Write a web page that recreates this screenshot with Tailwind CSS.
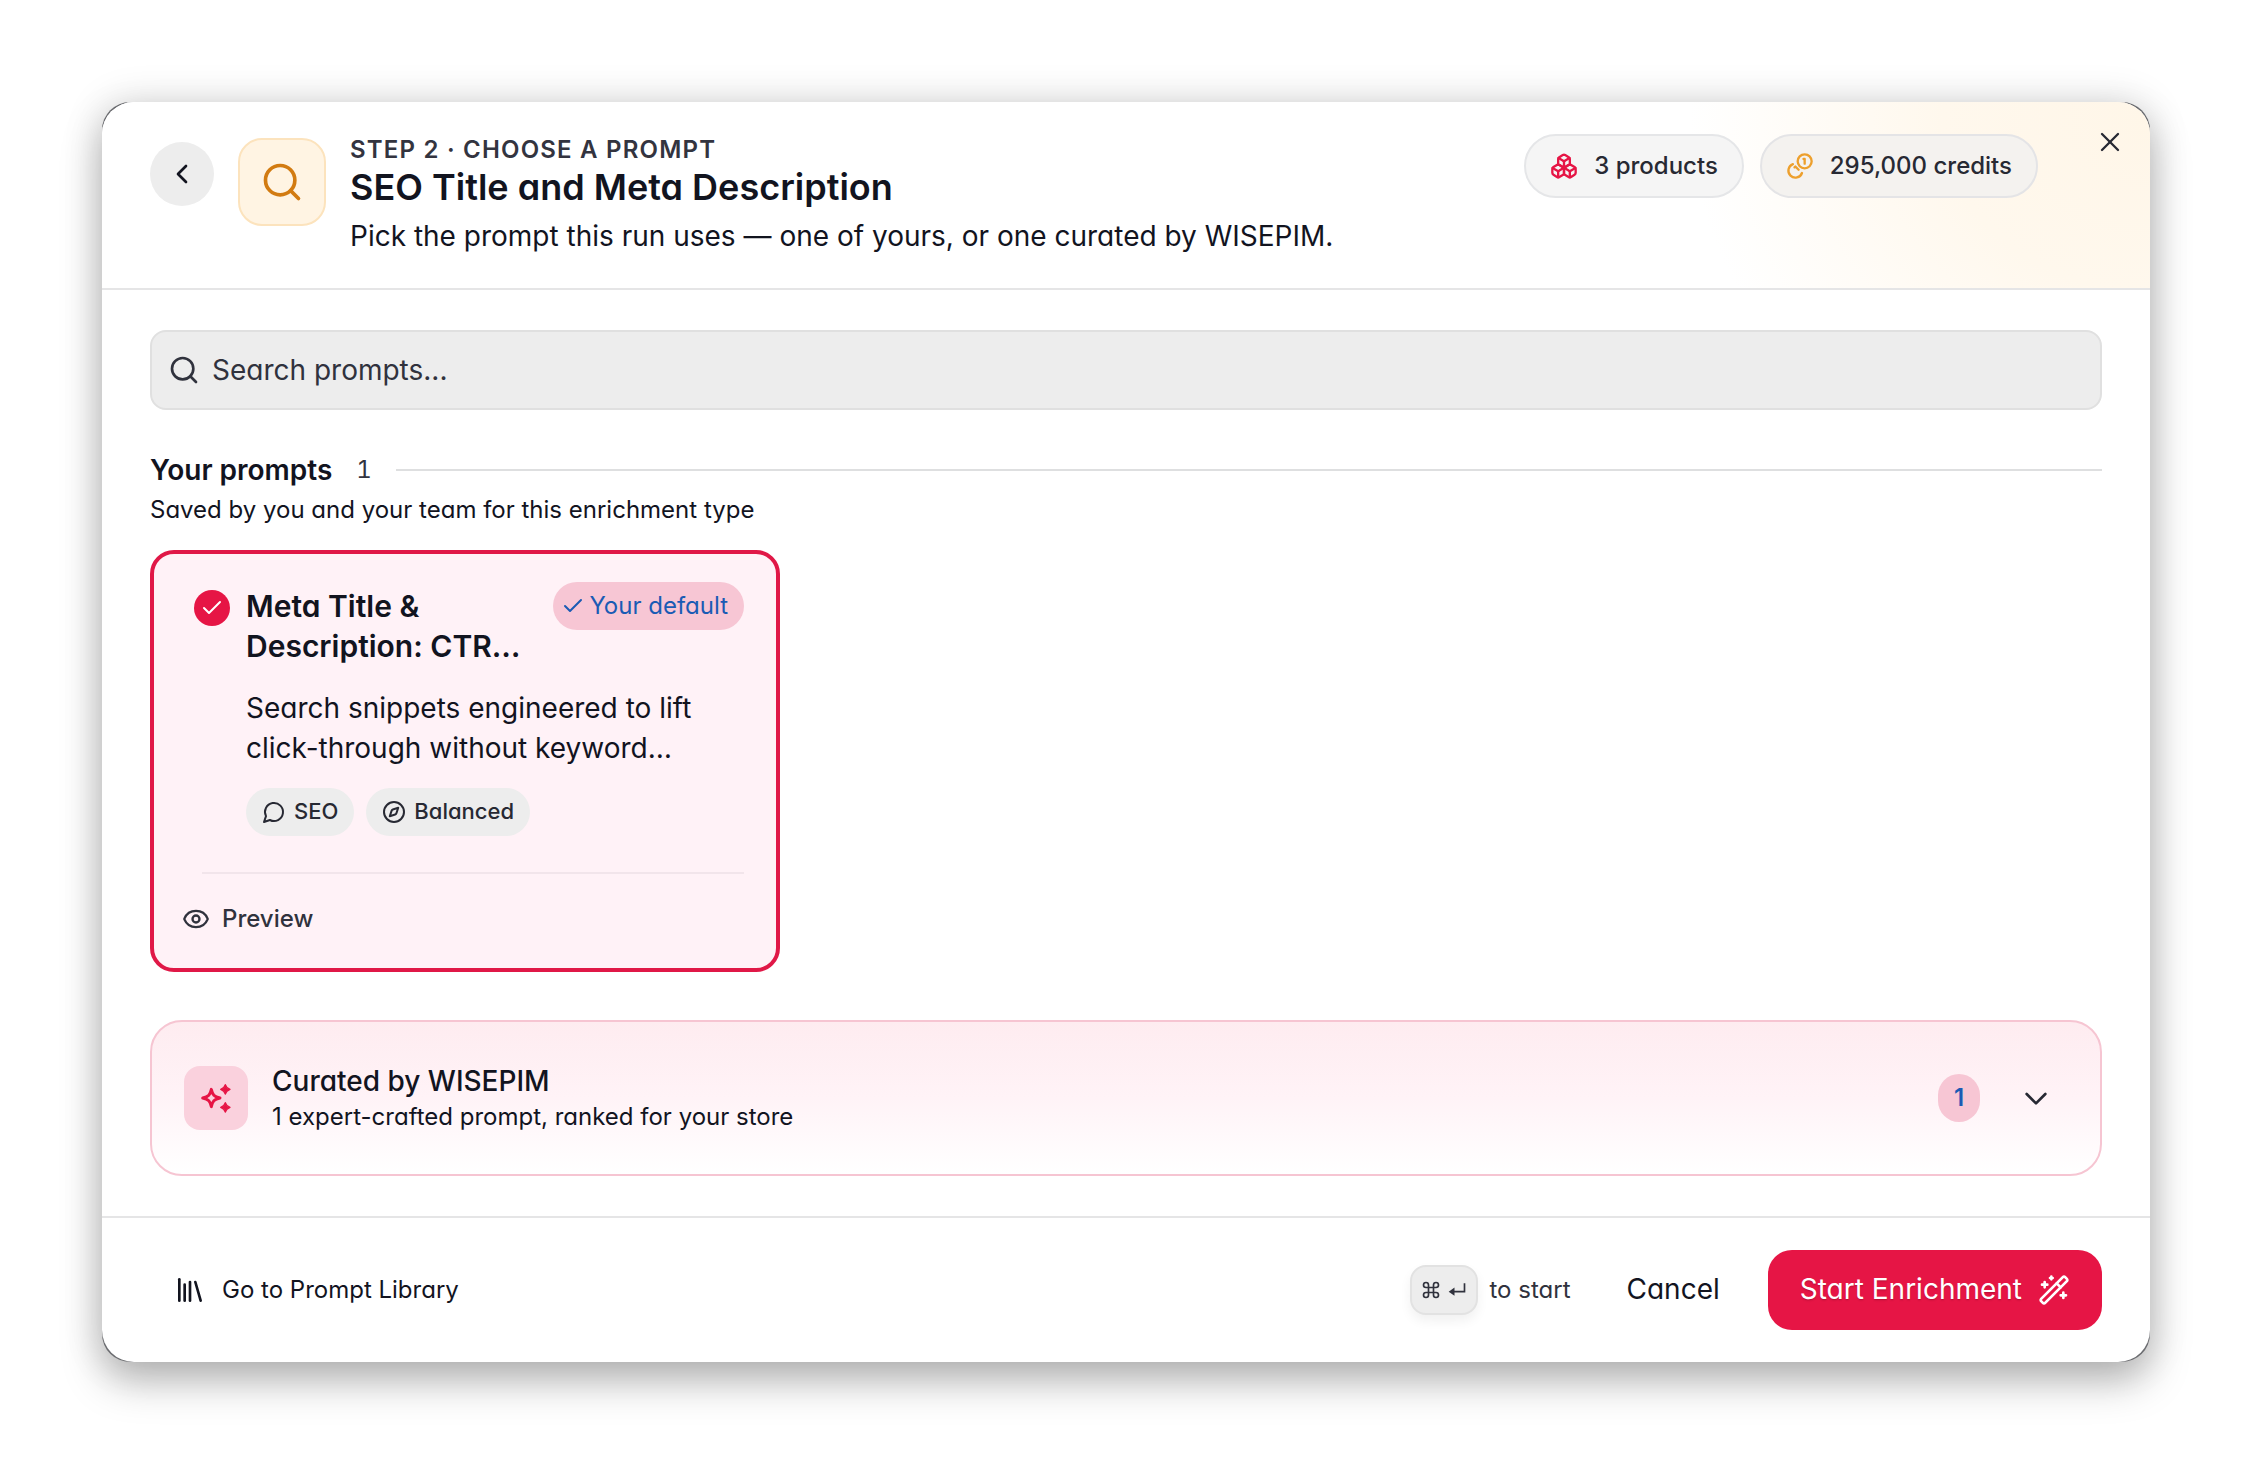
<!DOCTYPE html>
<html lang="en">
<head>
    <meta charset="UTF-8">
    <meta name="viewport" content="width=device-width, initial-scale=1">
    <title>Choose a prompt</title>
    <script src="https://cdn.jsdelivr.net/npm/@tailwindcss/browser@4"></script>
</head>
<body class="min-h-screen bg-white p-[102px] font-['Inter',sans-serif] text-2xl text-[#12141f] [font-feature-settings:'cv11']">
    <!-- Dialog -->
    <div class="rounded-[28px] bg-[#6b6c70] shadow-[0_20px_40px_rgba(0,0,0,0.26),0_0_40px_rgba(0,0,0,0.14)]">
      <main class="overflow-hidden rounded-[32px] bg-white">
        <!-- Header -->
        <header class="relative flex items-start border-b-2 border-[#e5e5e6] bg-[radial-gradient(ellipse_460px_380px_at_100%_10%,#fff6e8_0%,#fff8ed_45%,#ffffff_100%)] px-12 py-8">
          <button type="button" aria-label="Back" class="mt-2 flex size-16 items-center justify-center rounded-full bg-[#ededed]">
            <svg class="size-8" viewBox="0 0 24 24" fill="none" stroke="currentColor" stroke-width="2" stroke-linecap="round" stroke-linejoin="round"><path d="m15 18-6-6 6-6"/></svg>
          </button>
          <div class="mt-1 ml-6 flex size-[88px] items-center justify-center rounded-3xl border-2 border-[#fce3bd] bg-[#fff4e3] text-[#d27b11]">
            <svg class="size-11" viewBox="0 0 24 24" fill="none" stroke="currentColor" stroke-width="2" stroke-linecap="round" stroke-linejoin="round"><circle cx="11" cy="11" r="8"/><path d="m21 21-4.3-4.3"/></svg>
          </div>
          <div class="ml-6 flex-1">
            <p class="leading-8 font-semibold tracking-wider text-[#33343f] uppercase">Step 2 · Choose a prompt</p>
            <h1 class="text-4xl leading-[42px] font-semibold">SEO Title and Meta Description</h1>
            <p class="mt-2 text-[28px] leading-10">Pick the prompt this run uses — one of yours, or one curated by WISEPIM.</p>
          </div>
          <div class="mr-16 flex gap-4 font-medium text-[#272933]">
            <div class="flex h-16 items-center gap-4 rounded-full border-2 border-[#e5e6e8] bg-[#f5f5f5] px-6">
              <svg class="size-7 text-[#e61545]" viewBox="0 0 24 24" fill="none" stroke="currentColor" stroke-width="2" stroke-linecap="round" stroke-linejoin="round"><path d="M2.97 12.92A2 2 0 0 0 2 14.63v3.24a2 2 0 0 0 .97 1.71l3 1.8a2 2 0 0 0 2.06 0L12 19v-5.5l-5-3-4.03 2.42Z"/><path d="m7 16.500-4.740-2.850"/><path d="m7 16.500 5-3"/><path d="M7 16.500v5.170"/><path d="M12 13.500V19l3.970 2.380a2 2 0 0 0 2.060 0l3-1.800a2 2 0 0 0 .970-1.710v-3.240a2 2 0 0 0-.970-1.710L17 10.500l-5 3Z"/><path d="m17 16.500-5-3"/><path d="m17 16.500 4.740-2.850"/><path d="M17 16.500v5.170"/><path d="M7.970 4.420A2 2 0 0 0 7 6.130v4.370l5 3 5-3V6.130a2 2 0 0 0-.970-1.710l-3-1.800a2 2 0 0 0-2.060 0l-3 1.800Z"/><path d="M12 8 7.260 5.150"/><path d="m12 8 4.740-2.850"/><path d="M12 13.500V8"/></svg>
              <span>3 products</span>
            </div>
            <div class="flex h-16 items-center gap-4 rounded-full border-2 border-[#e4e4e6] bg-[#f4f2ef] px-6">
              <svg class="size-7 text-[#eda02d]" viewBox="0 0 24 24" fill="none" stroke="currentColor" stroke-width="2" stroke-linecap="round" stroke-linejoin="round"><circle cx="16" cy="8" r="6"/><path d="M5.910 10.370A6 6 0 1 0 13.700 18"/><path d="M15 6h1v4"/><path d="m7.290 13.120.71-.71 2.820 2.820"/></svg>
              <span>295,000 credits</span>
            </div>
          </div>
          <button type="button" aria-label="Close" class="absolute top-6 right-6">
            <svg class="size-8" viewBox="0 0 24 24" fill="none" stroke="#272933" stroke-width="1.75" stroke-linecap="round" stroke-linejoin="round"><path d="M18 6 6 18"/><path d="m6 6 12 12"/></svg>
          </button>
        </header>

        <!-- Prompt picker -->
        <div class="px-12 py-10">
          <label class="flex h-20 items-center gap-3 rounded-2xl border-2 border-[#e0e0e0] bg-[#ededed] px-4 text-[#30323d]">
            <svg class="size-8" viewBox="0 0 24 24" fill="none" stroke="currentColor" stroke-width="2" stroke-linecap="round" stroke-linejoin="round"><circle cx="11" cy="11" r="8"/><path d="m21 21-4.3-4.3"/></svg>
            <input type="search" aria-label="Search prompts" placeholder="Search prompts..." class="flex-1 bg-transparent pt-0.5 text-[28px] outline-none placeholder:text-[#30323d]">
          </label>

          <section class="mt-10">
            <div class="flex h-10 items-center">
              <h2 class="text-[28px] leading-10 font-semibold">Your prompts</h2>
              <span class="ml-6 text-[#33343f] tabular-nums">1</span>
              <div class="ml-6 h-0.5 flex-1 bg-[#dedfe0]"></div>
            </div>
            <p class="leading-10">Saved by you and your team for this enrichment type</p>

            <article class="mt-5 w-[630px] rounded-3xl border-4 border-[#e01847] bg-[#fff2f7] px-8 pt-7 pb-6">
              <div class="flex items-start">
                <span class="mt-2 ml-2 flex size-9 items-center justify-center rounded-full bg-[#e61545] text-white">
                  <svg class="size-6" viewBox="0 0 24 24" fill="none" stroke="currentColor" stroke-width="2" stroke-linecap="round" stroke-linejoin="round"><path d="M20 6 9 17l-5-5"/></svg>
                </span>
                <h3 class="mt-1 ml-4 flex-1 text-[30px] leading-10 font-semibold">Meta Title &amp;<br>Description: CTR…</h3>
                <span class="flex h-12 items-center gap-1 rounded-full bg-[#f7c6d4] pr-4 pl-2 text-[#1a5bb4]">
                  <svg class="size-6" viewBox="0 0 24 24" fill="none" stroke="currentColor" stroke-width="2" stroke-linecap="round" stroke-linejoin="round"><path d="M20 6 9 17l-5-5"/></svg>
                  Your default
                </span>
              </div>
              <p class="mt-5.5 ml-[60px] text-[28px] leading-10">Search snippets engineered to lift<br>click-through without keyword…</p>
              <div class="mt-5 ml-[60px] flex gap-3 text-[22px] font-medium text-[#272933]">
                <span class="flex h-12 items-center gap-2 rounded-full bg-[#ededed] px-4">
                  <svg class="size-6" viewBox="0 0 24 24" fill="none" stroke="currentColor" stroke-width="2" stroke-linecap="round" stroke-linejoin="round"><path d="M7.900 20A9 9 0 1 0 4 16.100L2 22Z"/></svg>
                  SEO
                </span>
                <span class="flex h-12 items-center gap-2 rounded-full bg-[#ededed] px-4">
                  <svg class="size-6" viewBox="0 0 24 24" fill="none" stroke="currentColor" stroke-width="2" stroke-linecap="round" stroke-linejoin="round"><circle cx="12" cy="12" r="10"/><path d="m16.240 7.760-1.804 5.411a2 2 0 0 1-1.265 1.265L7.760 16.240l1.804-5.411a2 2 0 0 1 1.265-1.265z"/></svg>
                  Balanced
                </span>
              </div>
              <hr class="mt-9 ml-4 border-t-2 border-[#f2e5eb]">
              <button type="button" class="mt-5 -ml-1 flex h-[50px] items-center gap-3 font-medium text-[#30323d]">
                <svg class="size-7" viewBox="0 0 24 24" fill="none" stroke="currentColor" stroke-width="2" stroke-linecap="round" stroke-linejoin="round"><path d="M2.062 12.348a1 1 0 0 1 0-.696 10.750 10.750 0 0 1 19.876 0 1 1 0 0 1 0 .696 10.750 10.750 0 0 1-19.876 0"/><circle cx="12" cy="12" r="3"/></svg>
                Preview
              </button>
            </article>
          </section>

          <!-- Curated prompts, collapsed -->
          <button type="button" aria-expanded="false" class="mt-12 flex h-[156px] w-full items-center rounded-[32px] border-2 border-[#f6c5d2] bg-linear-to-b from-[#feecf0] via-[#fff3f7] to-white px-8 text-left">
            <span class="flex size-16 items-center justify-center rounded-2xl bg-[#fad1dd] text-[#e61545]">
              <svg class="size-8" viewBox="0 0 24 24" fill="none" stroke="currentColor" stroke-width="2.200" stroke-linecap="round" stroke-linejoin="round"><path d="M8.500 5.500c.9 4 2 5.500 6.500 6.500-4.500 1-5.600 2.500-6.500 6.500-.9-4-2-5.500-6.500-6.500 4.500-1 5.600-2.500 6.500-6.500Z"/><path fill="currentColor" stroke-width="1" d="M19 2c.6 2.200 1.200 2.700 3.500 3.500-2.300.8-2.900 1.300-3.500 3.500-.6-2.200-1.200-2.700-3.500-3.500 2.300-.8 2.900-1.300 3.500-3.500ZM19 15.500c.6 2.200 1.200 2.700 3.500 3.500-2.300.8-2.900 1.300-3.500 3.500-.6-2.200-1.200-2.700-3.500-3.500 2.300-.8 2.900-1.300 3.500-3.500Z"/></svg>
            </span>
            <span class="ml-6 flex-1">
              <span class="block text-[28px] leading-9 font-medium">Curated by WISEPIM</span>
              <span class="mt-0.5 block leading-8">1 expert-crafted prompt, ranked for your store</span>
            </span>
            <span class="flex h-12 w-[42px] items-center justify-center rounded-full bg-[#f7c6d4] font-semibold text-[#1a5bb4]">1</span>
            <svg class="mr-4 ml-10 size-8" viewBox="0 0 24 24" fill="none" stroke="#272933" stroke-width="2" stroke-linecap="round" stroke-linejoin="round"><path d="m5 9 7 7 7-7"/></svg>
          </button>
        </div>

        <!-- Footer -->
        <footer class="flex items-center border-t-2 border-[#e5e5e6] px-12 py-8">
          <a href="#" class="ml-6 flex items-center gap-4">
            <svg class="size-8" viewBox="0 0 24 24" fill="none" stroke="currentColor" stroke-width="2" stroke-linecap="round" stroke-linejoin="round"><path d="m16 6 4 14"/><path d="M12 6v14"/><path d="M8 8v12"/><path d="M4 4v16"/></svg>
            Go to Prompt Library
          </a>
          <span class="ml-auto flex items-center gap-3 text-[#30323d]">
            <kbd class="flex h-[50px] w-[68px] items-center justify-center gap-1.5 rounded-2xl border-2 border-[#e2e2e2] bg-[#ededed] shadow-[0_6px_12px_rgba(0,0,0,0.06)]">
              <svg class="size-5" viewBox="0 0 24 24" fill="none" stroke="currentColor" stroke-width="2"><path d="M15 6v12a3 3 0 1 0 3-3H6a3 3 0 1 0 3 3V6a3 3 0 1 0-3 3h12a3 3 0 1 0-3-3"/></svg>
              <svg class="size-5" viewBox="0 0 24 24" fill="none" stroke="currentColor" stroke-width="2"><path d="M21 4v10H5"/><path fill="currentColor" stroke="none" d="M9 9v10l-7-5Z"/></svg>
            </kbd>
            to start
          </span>
          <button type="button" class="ml-6 px-8 text-[28px]">Cancel</button>
          <button type="button" class="ml-4 flex h-20 items-center gap-4 rounded-3xl bg-[#e61545] px-8 text-[28px] text-white text-shadow-sm">
            Start Enrichment
            <svg class="size-8" viewBox="0 0 24 24" fill="none" stroke="currentColor" stroke-width="2" stroke-linecap="round" stroke-linejoin="round"><path d="m21.640 3.640-1.280-1.280a1.210 1.210 0 0 0-1.720 0L2.360 18.640a1.210 1.210 0 0 0 0 1.720l1.280 1.280a1.200 1.200 0 0 0 1.720 0L21.640 5.360a1.200 1.200 0 0 0 0-1.720"/><path d="m14 7 3 3"/><path d="M5 6v4M19 14v4M10 2v2M7 8H3M21 16h-4M11 3H9"/></svg>
          </button>
        </footer>
      </main>
    </div>
</body>
</html>
